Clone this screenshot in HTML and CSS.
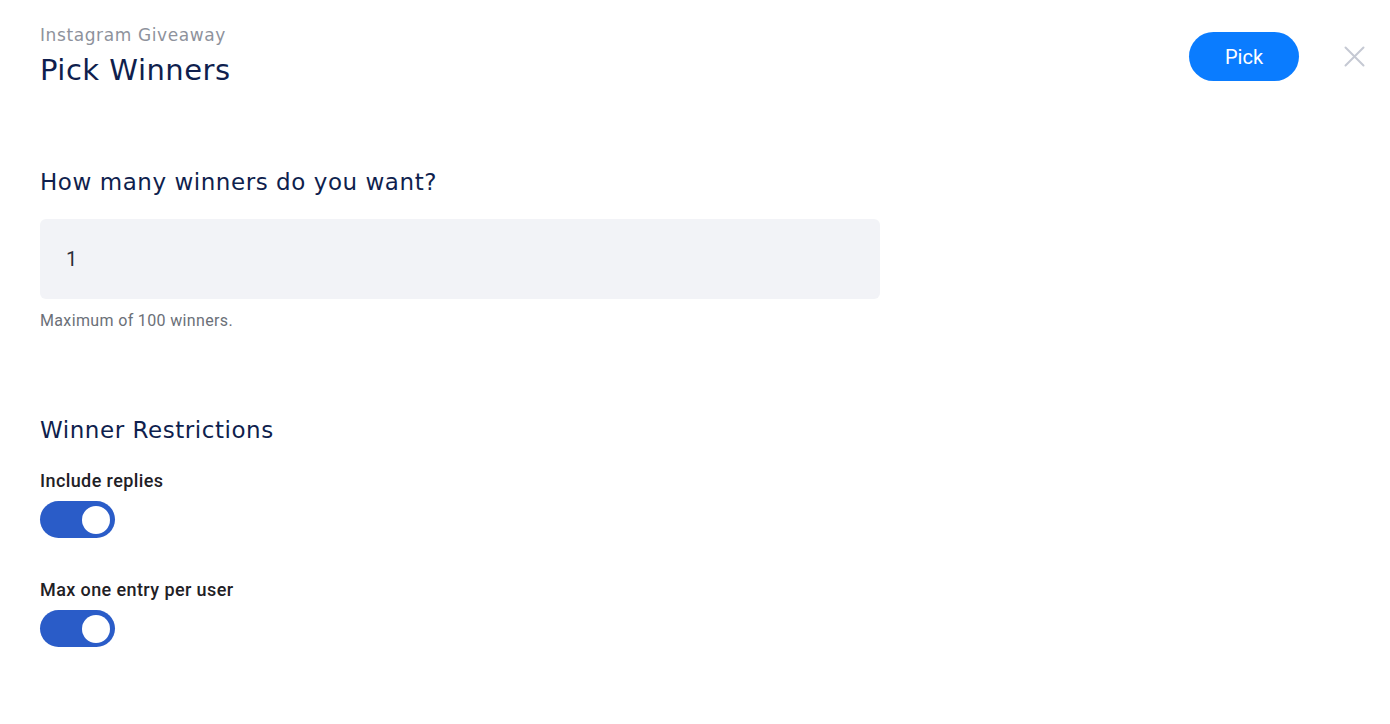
FILE: index.html
```html
<!DOCTYPE html>
<html lang="en">
<head>
<meta charset="utf-8">
<title>Pick Winners</title>
<link rel="stylesheet" href="styles.css">
</head>
<body>
<div class="page">
  <header class="header">
    <div class="titles">
      <div class="eyebrow">Instagram Giveaway</div>
      <h1 class="title">Pick Winners</h1>
    </div>
    <div class="actions">
      <button class="pick-btn" type="button">Pick</button>
      <button class="close-btn" type="button" aria-label="Close">
        <svg width="21" height="21" viewBox="0 0 21 21" fill="none" stroke="#c5c9d3" stroke-width="2" stroke-linecap="round">
          <path d="M1.5 1.5 L19.5 19.5 M19.5 1.5 L1.5 19.5"/>
        </svg>
      </button>
    </div>
  </header>

  <section class="section winners">
    <h2 class="section-title">How many winners do you want?</h2>
    <div class="input">1</div>
    <p class="hint">Maximum of 100 winners.</p>
  </section>

  <section class="section restrictions">
    <h2 class="section-title">Winner Restrictions</h2>
    <div class="option">
      <div class="option-label">Include replies</div>
      <div class="toggle on"><span class="knob"></span></div>
    </div>
    <div class="option">
      <div class="option-label">Max one entry per user</div>
      <div class="toggle on"><span class="knob"></span></div>
    </div>
  </section>
</div>
</body>
</html>
```
FILE: styles.css
```css
* { box-sizing: border-box; }
html, body { margin: 0; padding: 0; background: #ffffff; }
body { font-family: Roboto, "Liberation Sans", sans-serif; color: #222; }

.page { padding: 24px 25px 0 40px; }

.header { display: flex; justify-content: space-between; align-items: flex-start; }
.titles { display: flex; flex-direction: column; }
.eyebrow {
  font-family: "DejaVu Sans", sans-serif;
  font-size: 17px; line-height: 22px; color: #8e929c;
  font-weight: 400; letter-spacing: 0.6px;
}
.title {
  margin: 8px 0 0 0;
  font-family: "DejaVu Sans", sans-serif;
  font-size: 29px; line-height: 32px; font-weight: 400; color: #0f1f4e;
  letter-spacing: 0.5px;
}
.actions { display: flex; align-items: center; gap: 45px; margin-top: 8px; }
.pick-btn {
  width: 110px; height: 49px; border: 0; border-radius: 25px;
  background: #0a7cff; color: #fff;
  font-family: Roboto, sans-serif; font-size: 20px; font-weight: 400;
  cursor: pointer;
}
.close-btn { background: none; border: 0; padding: 0; width: 21px; height: 21px; display: flex; }

.section-title {
  margin: 0;
  font-family: "DejaVu Sans", sans-serif;
  font-size: 23px; line-height: 28px; font-weight: 400; color: #0f1f4e;
  letter-spacing: 0.55px;
}
.winners { margin-top: 82px; }
.input {
  margin-top: 23px; width: 840px; height: 80px;
  background: #f2f3f7; border-radius: 6px;
  display: flex; align-items: center; padding-left: 26px;
  font-size: 20px; color: #2b2f3a;
}
.hint { margin: 13px 0 0 0; font-size: 16px; line-height: 18px; color: #6b7078; letter-spacing: 0.35px; }

.restrictions { margin-top: 86px; }
.option { margin-top: 26px; }
.option + .option { margin-top: 41px; }
.option-label { font-size: 18px; line-height: 22px; font-weight: 500; color: #1f2126; letter-spacing: 0.4px; }
.toggle {
  margin-top: 9px; width: 75px; height: 37px; border-radius: 19px;
  background: #2a5cc8; display: flex; align-items: center; justify-content: flex-end;
  padding-right: 5px;
}
.knob { width: 28px; height: 28px; border-radius: 50%; background: #fff; }
```
